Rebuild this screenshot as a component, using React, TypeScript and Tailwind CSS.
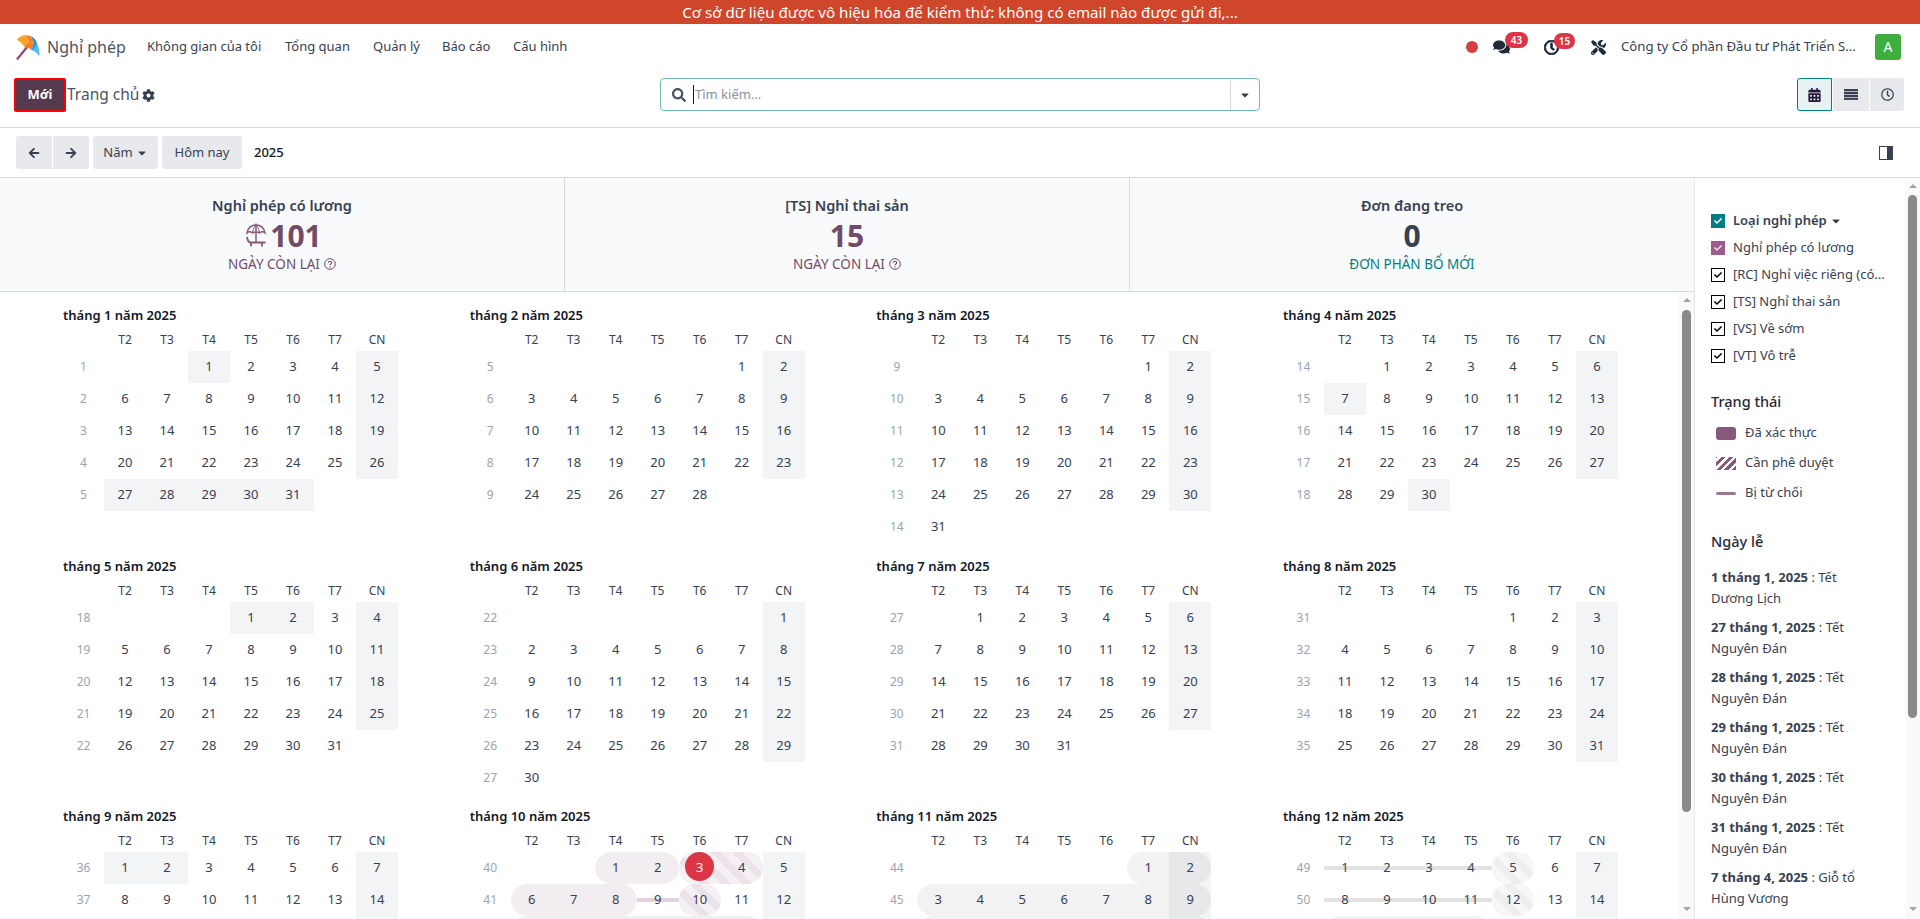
import {
  FaArrowLeft,
  FaArrowRight,
  FaCalendarAlt,
  FaCaretDown,
  FaCheck,
  FaCog,
  FaComments,
  FaRegClock,
  FaSearch,
  FaTools,
} from 'react-icons/fa';

type Kind = 'solid' | 'stripe' | 'line';
type Tone = 'purple' | 'grey';

interface Span {
  from: number;
  to: number;
  kind: Kind;
  tone: Tone;
}

const weekDays = ['T2', 'T3', 'T4', 'T5', 'T6', 'T7', 'CN'];

// first ISO week shown for each month
const firstWeeks = [1, 5, 9, 14, 18, 22, 27, 31, 36, 40, 44, 49];

// public holidays, highlighted the same way as sundays
const holidays: Record<number, number[]> = {
  0: [1, 27, 28, 29, 30, 31],
  3: [7, 30],
  4: [1, 2],
  8: [1, 2],
};

const spans: Record<number, Span[]> = {
  9: [
    { from: 1, to: 2, kind: 'solid', tone: 'purple' },
    { from: 3, to: 4, kind: 'stripe', tone: 'purple' },
    { from: 6, to: 8, kind: 'solid', tone: 'purple' },
    { from: 9, to: 9, kind: 'line', tone: 'purple' },
    { from: 10, to: 10, kind: 'stripe', tone: 'purple' },
    { from: 13, to: 18, kind: 'solid', tone: 'purple' },
  ],
  10: [
    { from: 1, to: 2, kind: 'solid', tone: 'grey' },
    { from: 3, to: 9, kind: 'solid', tone: 'grey' },
    { from: 10, to: 16, kind: 'solid', tone: 'grey' },
  ],
  11: [
    { from: 1, to: 4, kind: 'line', tone: 'grey' },
    { from: 5, to: 5, kind: 'stripe', tone: 'grey' },
    { from: 8, to: 11, kind: 'line', tone: 'grey' },
    { from: 12, to: 12, kind: 'stripe', tone: 'grey' },
    { from: 15, to: 18, kind: 'solid', tone: 'grey' },
  ],
};

const leaveTypes = [
  '[RC] Nghỉ việc riêng (có...',
  '[TS] Nghỉ thai sản',
  '[VS] Về sớm',
  '[VT] Vô trễ',
];

const holidayList = [
  { date: '1 tháng 1, 2025', first: 'Tết', second: 'Dương Lịch' },
  { date: '27 tháng 1, 2025', first: 'Tết', second: 'Nguyên Đán' },
  { date: '28 tháng 1, 2025', first: 'Tết', second: 'Nguyên Đán' },
  { date: '29 tháng 1, 2025', first: 'Tết', second: 'Nguyên Đán' },
  { date: '30 tháng 1, 2025', first: 'Tết', second: 'Nguyên Đán' },
  { date: '31 tháng 1, 2025', first: 'Tết', second: 'Nguyên Đán' },
  { date: '7 tháng 4, 2025', first: 'Giỗ tổ', second: 'Hùng Vương' },
];

function eventClass(span: Span, day: number, dow: number) {
  const left = day === span.from || dow === 0 ? 'rounded-l-full' : '';
  const right = day === span.to || dow === 6 ? 'rounded-r-full' : '';
  if (span.kind === 'solid') {
    const fill = span.tone === 'purple' ? 'bg-[#714b67]/10' : 'bg-[#808080]/10';
    return `inset-0 ${fill} ${left} ${right}`;
  }
  if (span.kind === 'line') {
    const fill = span.tone === 'purple' ? 'bg-[#e0d3dd]' : 'bg-[#e2e2e2]';
    return `inset-x-0 top-[14px] h-[4px] ${fill}`;
  }
  const stripes =
    span.tone === 'purple'
      ? 'bg-[repeating-linear-gradient(45deg,#ece3ea,#ece3ea_7.42px,#f5f0f4_7.42px,#f5f0f4_14.85px)]'
      : 'bg-[repeating-linear-gradient(45deg,#eeeeee,#eeeeee_7.42px,#f7f7f7_7.42px,#f7f7f7_14.85px)]';
  return `inset-0 ${stripes} ${left} ${right}`;
}

function Month({ month }: { month: number }) {
  const first = (new Date(2025, month, 1).getDay() + 6) % 7;
  const count = new Date(2025, month + 1, 0).getDate();
  // the last line of months only shows its first pixels, below that the view is scrolled away
  const rows = month >= 8 ? 3 : Math.ceil((first + count) / 7);
  const special = holidays[month] ?? [];
  const monthSpans = spans[month] ?? [];

  return (
    <div className="h-[250.67px]">
      <div className="h-[17px] text-[13px] leading-[17px] font-semibold text-[#111827] pl-px">
        tháng {month + 1} năm 2025
      </div>
      <div className="grid grid-cols-[repeat(8,42px)] mt-[7px]">
        <div className="h-[20px]" />
        {weekDays.map((d) => (
          <div key={d} className="h-[20px] text-center text-[12px] leading-[17px] text-[#374151]">
            {d}
          </div>
        ))}
        {Array.from({ length: rows }).map((_, r) => {
          const hidden = month >= 8 && r === 2;
          return (
            <div key={r} className="contents">
              <div className="h-[32px] text-center text-[12px] leading-[32px] text-[#9ca3af] pl-[1px]">
                {!hidden && firstWeeks[month] + r}
              </div>
              {weekDays.map((_, c) => {
                const day = r * 7 + c - first + 1;
                if (day < 1 || day > count) return <div key={c} className="h-[32px]" />;
                const shaded = c === 6 || special.includes(day);
                const span = monthSpans.find((s) => day >= s.from && day <= s.to);
                const isToday = month === 9 && day === 3;
                return (
                  <div
                    key={c}
                    className={`relative h-[32px] text-center text-[13px] leading-[30px] text-[#374151] ${shaded ? 'bg-[#f3f4f6]' : ''}`}
                  >
                    {span && <div className={`absolute ${eventClass(span, day, c)}`} />}
                    {isToday && (
                      <div className="absolute left-[6.5px] top-0 h-[29px] w-[29px] rounded-full bg-[#dc3545]" />
                    )}
                    {!hidden && <span className={`relative ${isToday ? 'text-white' : ''}`}>{day}</span>}
                  </div>
                );
              })}
            </div>
          );
        })}
      </div>
    </div>
  );
}

function ScrollBar({ thumbTop, thumbHeight }: { thumbTop: string; thumbHeight: string }) {
  return (
    <div className="w-[15px] shrink-0 flex flex-col items-center bg-[#fafafa] self-stretch">
      <div className="h-[15px] flex items-center justify-center shrink-0">
        <div className="w-0 h-0 border-x-[4px] border-x-transparent border-b-[4px] border-b-[#a3a3a3]" />
      </div>
      <div className={`${thumbTop} ${thumbHeight} w-[9px] rounded-full bg-[#8a8a8a] shrink-0`} />
      <div className="flex-1" />
      <div className="h-[15px] flex items-center justify-center shrink-0 -mt-[3px] mb-[3px]">
        <div className="w-0 h-0 border-x-[4px] border-x-transparent border-t-[4px] border-t-[#a3a3a3]" />
      </div>
    </div>
  );
}

function CheckBox({ className }: { className: string }) {
  return (
    <span className={`w-[14px] h-[14px] flex items-center justify-center shrink-0 ${className}`}>
      <FaCheck className="w-[8px] h-[8px]" />
    </span>
  );
}

function Stat({
  title,
  value,
  footer,
  footerClass,
  valueClass,
  help,
  icon,
}: {
  title: string;
  value: string;
  footer: string;
  footerClass: string;
  valueClass: string;
  help?: boolean;
  icon?: boolean;
}) {
  return (
    <div className="flex-1 flex flex-col items-center pt-[17px] border-r border-[#d8dadd] last:border-r-0">
      <div className="text-[14.5px] leading-[20px] font-semibold text-[#374151]">{title}</div>
      <div className={`flex items-center gap-[4px] h-[36px] mt-[2px] text-[30px] font-bold ${valueClass}`}>
        {icon && <UmbrellaIcon />}
        {value}
      </div>
      <div className={`flex items-center gap-[4px] text-[13.5px] leading-[22px] ${footerClass}`}>
        {footer}
        {help && <HelpIcon />}
      </div>
    </div>
  );
}

function UmbrellaIcon() {
  return (
    <svg className="ml-[4px] w-[20px] h-[24px] text-[#875a7b]" viewBox="0 0 20 24" fill="none" stroke="currentColor" strokeWidth={1.5}>
      <path d="M1 10C1.500 5 5.500 2 10 2S18.500 5 19 10C17.500 8.700 15 8.700 13.500 10C12 8.700 8 8.700 6.500 10C5 8.700 2.500 8.700 1 10Z" />
      <path d="M10 2C8 4 6.800 7 6.500 10M10 2C12 4 13.200 7 13.500 10" strokeWidth={1} />
      <path d="M10 .500V19" />
      <path d="M1 14C1.500 17.500 3 19.500 5 19.500H19.500" strokeWidth={1.800} />
      <path d="M5 19.500v4M16 19.500v4" strokeWidth={1.800} />
    </svg>
  );
}

function HelpIcon() {
  return (
    <svg className="w-[12px] h-[12px]" viewBox="0 0 12 12" fill="none" stroke="currentColor">
      <circle cx="6" cy="6" r="5.300" strokeWidth={1} />
      <path d="M4.300 4.700C4.400 3.700 5.100 3.200 6 3.200c1 0 1.700.6 1.700 1.500 0 1.300-1.700 1.300-1.700 2.500" strokeWidth={1.100} />
      <path d="M6 8.200v1.200" strokeWidth={1.200} />
    </svg>
  );
}

function LeaveLogo() {
  return (
    <svg className="w-[24px] h-[25px]" viewBox="0 0 24 25">
      <path d="M1 24.500L11.500 11.500" stroke="#8a4a80" strokeWidth={2.200} />
      <path d="M.7 5Q4 .5 9.500.3L13 7Q10 8 8.500 12.500Q6 7 .7 5Z" fill="#fba32a" />
      <path d="M9.500.3Q12.500.2 14.800 1.200L18 8Q15 7.500 13 7Z" fill="#f58220" />
      <path d="M8.500 12.500Q10 8 13 7L18 8L15.500 15Q13 12 8.500 12.500Z" fill="#f58220" />
      <path d="M14.800 1.200Q19 3 21 8L18.500 15.500L15.500 15L18 8Z" fill="#1b8fe0" />
      <path d="M21 8Q24 14 23.300 21.700Q20.500 16.500 15.500 15L18.500 13Z" fill="#4fbdfa" />
    </svg>
  );
}

function ListIcon() {
  return (
    <svg className="w-[14px] h-[11px]" viewBox="0 0 14 11" fill="currentColor">
      <rect width="14" height="2.200" />
      <rect y="2.900" width="14" height="2.200" />
      <rect y="5.800" width="14" height="2.200" />
      <rect y="8.700" width="14" height="2.200" />
    </svg>
  );
}

const months = Array.from({ length: 12 }, (_, i) => i);

export default function App() {
  return (
    <div className="h-[919px] w-[1920px] overflow-hidden flex flex-col bg-white font-['Noto_Sans','Open_Sans',sans-serif] text-[13px] text-[#374151]">
      {/* Demo banner */}
      <div className="h-[24px] shrink-0 bg-[#d0462a] text-white text-[15.1px] leading-[24px] text-center">
        Cơ sở dữ liệu được vô hiệu hóa để kiểm thử: không có email nào được gửi đi,...
      </div>

      {/* Navbar */}
      <div className="h-[46px] shrink-0 flex items-center pl-[16px] pr-[19px]">
        <LeaveLogo />
        <span className="ml-[7px] text-[16px] text-[#4b5563] w-[100px]">Nghỉ phép</span>
        <nav className="flex text-[13px] text-[#374151]">
          <span className="w-[138px]">Không gian của tôi</span>
          <span className="w-[88px]">Tổng quan</span>
          <span className="w-[69px]">Quản lý</span>
          <span className="w-[71px]">Báo cáo</span>
          <span>Cấu hình</span>
        </nav>
        <div className="flex-1" />
        <div className="w-[12px] h-[12px] rounded-full bg-[#d63f3f] mr-[15px]" />
        <div className="relative w-[17px] mr-[34px] text-[#1f2937]">
          <FaComments className="w-[17px] h-[16px]" />
          <span className="absolute -top-[7px] left-[12px] h-[16px] w-[23px] rounded-full bg-[#dc3545] text-white text-[10px] leading-[16px] font-semibold text-center">
            43
          </span>
        </div>
        <div className="relative w-[15px] mr-[32px] text-[#1f2937]">
          <FaRegClock className="w-[15px] h-[15px]" strokeWidth={30} />
          <span className="absolute -top-[7px] left-[10px] h-[16px] w-[21px] rounded-full bg-[#dc3545] text-white text-[10px] leading-[16px] font-semibold text-center">
            15
          </span>
        </div>
        <FaTools className="w-[15px] h-[15px] text-[#1f2937] mr-[15px]" />
        <span className="w-[235px] whitespace-nowrap text-[13.15px] text-[#374151] mr-[19px]">
          Công ty Cổ phần Đầu tư Phát Triển S...
        </span>
        <div className="w-[26px] h-[26px] rounded-[3px] bg-[#3eae3e] text-white text-[14px] leading-[26px] text-center">
          A
        </div>
      </div>

      {/* Control panel */}
      <div className="h-[58px] shrink-0 flex items-start pt-[8px] border-b border-[#d8dadd]">
        <div className="w-[660px] flex items-center pl-[14px]">
          <button className="w-[52px] h-[34px] border-2 border-[#ff0000] rounded-[2px] bg-[#54394f] text-white text-[13px] font-bold">
            Mới
          </button>
          <span className="ml-[1px] text-[15.5px] text-[#4b5563]">Trang chủ</span>
          <FaCog className="ml-[3px] w-[13px] h-[13px] text-[#374151]" />
        </div>
        <div className="w-[600px] h-[33px] border border-[#71b8bb] rounded-[4px] flex items-center">
          <FaSearch className="ml-[11px] w-[14px] h-[14px] text-[#4b5563]" />
          <span className="ml-[7px] w-px h-[19px] bg-[#111827]" />
          <span className="ml-px flex-1 text-[13px] text-[#8b929c]">Tìm kiếm...</span>
          <div className="w-[29px] h-full border-l border-[#d8dadd] flex items-center justify-center">
            <FaCaretDown className="w-[12px] h-[12px] text-[#374151]" />
          </div>
        </div>
        <div className="flex-1 flex justify-end pr-[16px] gap-px">
          <div className="w-[35px] h-[33px] flex items-center justify-center border border-[#017e84] bg-[#e6f2f3] rounded-l-[3px] text-[#2a1a3a]">
            <FaCalendarAlt className="w-[13px] h-[14px]" />
          </div>
          <div className="w-[36px] h-[33px] flex items-center justify-center bg-[#e7e9ed] text-[#374151]">
            <ListIcon />
          </div>
          <div className="w-[34px] h-[33px] flex items-center justify-center bg-[#e7e9ed] rounded-r-[3px] text-[#374151]">
            <FaRegClock className="w-[13px] h-[13px]" />
          </div>
        </div>
      </div>

      {/* Calendar toolbar */}
      <div className="h-[50px] shrink-0 flex items-center pl-[16px] pr-[27px] border-b border-[#d8dadd] text-[13px]">
        <button className="w-[36px] h-[33px] bg-[#e7e9ed] rounded-l-[3px] flex items-center justify-center">
          <FaArrowLeft className="w-[12px] h-[12px]" />
        </button>
        <button className="ml-px w-[36px] h-[33px] bg-[#e7e9ed] rounded-r-[3px] flex items-center justify-center">
          <FaArrowRight className="w-[12px] h-[12px]" />
        </button>
        <button className="ml-[4px] w-[65px] h-[33px] bg-[#e7e9ed] rounded-[3px] flex items-center justify-center gap-[3px]">
          Năm
          <FaCaretDown className="w-[12px] h-[12px]" />
        </button>
        <button className="ml-[4px] w-[80px] h-[33px] bg-[#e7e9ed] rounded-[3px]">Hôm nay</button>
        <span className="ml-[12px] font-medium text-[#111827]">2025</span>
        <div className="flex-1" />
        <div className="w-[14px] h-[14px] border border-[#374151] flex justify-end">
          <div className="w-[5px] bg-[#374151]" />
        </div>
      </div>

      {/* Body */}
      <div className="flex-1 min-h-0 flex">
        <div className="w-[1695px] shrink-0 flex flex-col min-h-0 border-r border-[#e5e7eb]">
          <div className="h-[114px] shrink-0 flex bg-[#f9fafb] border-b border-[#d8dadd]">
            <Stat
              title="Nghỉ phép có lương"
              value="101"
              footer="NGÀY CÒN LẠI"
              valueClass="text-[#714b67]"
              footerClass="text-[#714b67]"
              help
              icon
            />
            <Stat
              title="[TS] Nghỉ thai sản"
              value="15"
              footer="NGÀY CÒN LẠI"
              valueClass="text-[#714b67]"
              footerClass="text-[#714b67]"
              help
            />
            <Stat
              title="Đơn đang treo"
              value="0"
              footer="ĐƠN PHÂN BỔ MỚI"
              valueClass="text-[#374151]"
              footerClass="text-[#017e84]"
            />
          </div>
          <div className="flex-1 min-h-0 flex">
            <div className="flex-1 overflow-hidden pl-[62px] pt-[15px]">
              <div className="grid grid-cols-[repeat(4,406.670px)]">
                {months.map((m) => (
                  <Month key={m} month={m} />
                ))}
              </div>
            </div>
            <ScrollBar thumbTop="mt-[3px]" thumbHeight="h-[502px]" />
          </div>
        </div>

        {/* Side panel */}
        <div className="flex-1 min-w-0 flex">
          <div className="flex-1 min-w-0 pl-[16px] pt-[36px] text-[13px] overflow-hidden">
            <div className="flex items-center h-[14px] gap-[8px] font-semibold text-[#374151]">
              <CheckBox className="bg-[#017e84] text-white" />
              <span>Loại nghỉ phép</span>
              <FaCaretDown className="-ml-[5px] w-[12px] h-[12px]" />
            </div>
            <div className="mt-[13px] flex items-center h-[14px] gap-[8px]">
              <CheckBox className="bg-[#9c5d8c] text-[#eadfe7]" />
              <span>Nghỉ phép có lương</span>
            </div>
            {leaveTypes.map((name) => (
              <div key={name} className="mt-[13px] flex items-center h-[14px] gap-[8px] whitespace-nowrap">
                <CheckBox className="border border-black text-black bg-white" />
                <span>{name}</span>
              </div>
            ))}

            <div className="mt-[28px] text-[14.500px] leading-[20px] font-medium text-[#1f2937]">Trạng thái</div>
            <div className="mt-[12px] flex flex-col gap-[10px] pl-[5px] text-[13px]">
              <div className="h-[20px] flex items-center gap-[9px]">
                <span className="w-[20px] h-[13px] rounded-[3px] bg-[#875a7b]" />
                Đã xác thực
              </div>
              <div className="h-[20px] flex items-center gap-[9px]">
                <span className="w-[20px] h-[13px] bg-[repeating-linear-gradient(-45deg,#875a7b,#875a7b_3px,#ffffff_3px,#ffffff_5.500px)]" />
                Cần phê duyệt
              </div>
              <div className="h-[20px] flex items-center gap-[9px]">
                <span className="w-[20px] h-[3px] rounded-full bg-[#9c7691]" />
                Bị từ chối
              </div>
            </div>

            <div className="mt-[28px] text-[14.500px] leading-[20px] font-medium text-[#1f2937]">Ngày lễ</div>
            <div className="mt-[16px] flex flex-col gap-[8px] leading-[21px]">
              {holidayList.map((h) => (
                <div key={h.date}>
                  <span className="font-bold">{h.date}</span> : {h.first}
                  <br />
                  {h.second}
                </div>
              ))}
            </div>
          </div>
          <ScrollBar thumbTop="mt-[2px]" thumbHeight="h-[523px]" />
        </div>
      </div>
    </div>
  );
}
